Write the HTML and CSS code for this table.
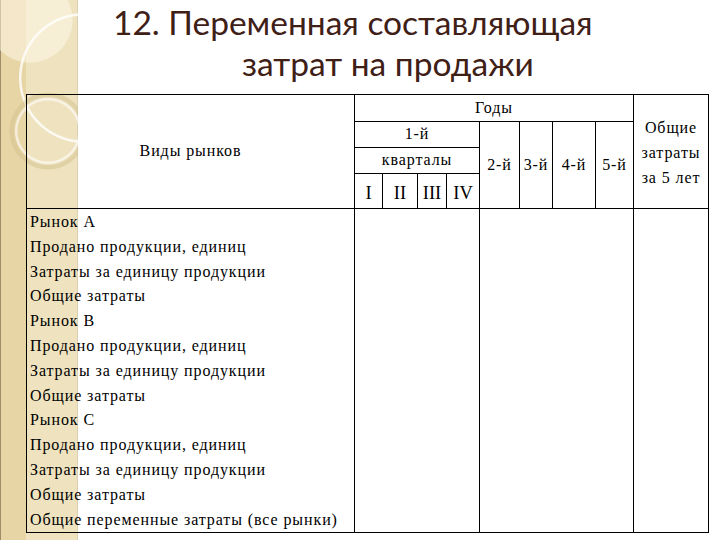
FILE: index.html
```html
<!DOCTYPE html>
<html lang="ru">
<head>
<meta charset="utf-8">
<link rel="stylesheet" href="styles.css">
</head>
<body>
<div class="slide">
  <h1 class="title">
    <span class="line1">12. Переменная составляющая</span>
    <span class="line2">затрат на продажи</span>
  </h1>
  <table class="grid">
    <colgroup>
      <col class="c-name"><col class="c-q1"><col class="c-q2"><col class="c-q3"><col class="c-q4">
      <col class="c-y2"><col class="c-y3"><col class="c-y4"><col class="c-y5"><col class="c-tot">
    </colgroup>
    <tr class="r1">
      <td rowspan="4" class="head-name">Виды рынков</td>
      <td colspan="8">Годы</td>
      <td rowspan="4" class="tot">Общие<br>затраты<br>за 5 лет</td>
    </tr>
    <tr class="r2">
      <td colspan="4">1-й</td>
      <td rowspan="3">2-й</td>
      <td rowspan="3">3-й</td>
      <td rowspan="3">4-й</td>
      <td rowspan="3">5-й</td>
    </tr>
    <tr class="r3">
      <td colspan="4">кварталы</td>
    </tr>
    <tr class="r4">
      <td class="roman">I</td><td class="roman">II</td><td class="roman">III</td><td class="roman">IV</td>
    </tr>
    <tr class="body">
      <td class="items">Рынок А<br>Продано продукции, единиц<br>Затраты за единицу продукции<br>Общие затраты<br>Рынок В<br>Продано продукции, единиц<br>Затраты за единицу продукции<br>Общие затраты<br>Рынок С<br>Продано продукции, единиц<br>Затраты за единицу продукции<br>Общие затраты<br>Общие переменные затраты (все рынки)</td>
      <td colspan="4"></td>
      <td colspan="4"></td>
      <td></td>
    </tr>
  </table>
</div>
</body>
</html>
```
FILE: styles.css
```css
html, body {
  margin: 0;
  padding: 0;
  background: #fff;
}
.slide {
  width: 720px;
  height: 540px;
  overflow: hidden;
  background-color: #fff;
  background-image:
    radial-gradient(circle at 48px 131px, transparent 30px, rgba(255,255,255,0.6) 31px, rgba(255,255,255,0.6) 32.5px, transparent 33.5px),
    radial-gradient(circle at 48px 131px, transparent 33px, rgba(210,192,140,0.5) 35px, rgba(210,192,140,0.5) 38px, transparent 39px),
    radial-gradient(circle at 84px 78px, transparent 62px, rgba(255,255,255,0.8) 63px, rgba(255,255,255,0.8) 64.5px, transparent 65.5px),
    radial-gradient(circle at 30px 20px, rgba(255,250,235,0.5) 0, rgba(255,250,235,0.5) 42px, transparent 43px),
    linear-gradient(to right, #a08c68 0, #a08c68 1px, #e7d5a6 1px, #e7d5a6 26px, #eee2bf 26px, #eee2bf 77px, #dcd0b4 77px, #dcd0b4 78px, transparent 78px);
  background-size: 78px 540px;
  background-repeat: no-repeat;
}
.title {
  margin: 0;
  height: 94px;
  box-sizing: border-box;
  padding-top: 2px;
  font-family: "Lato", "Open Sans", sans-serif;
  font-weight: 400;
  font-size: 33.5px;
  line-height: 41px;
  color: #3f2017;
}
.line1, .line2 {
  display: block;
  white-space: nowrap;
}
.line1 { padding-left: 113px; }
.line2 { padding-left: 242px; }
.grid {
  margin-left: 26px;
  width: 682px;
  table-layout: fixed;
  border-collapse: collapse;
  font-family: "Liberation Serif", "Lato", serif;
  font-size: 16px;
  letter-spacing: 0.9px;
  color: #000;
}
.grid td {
  border: 1px solid #000;
  padding: 0;
  text-align: center;
  vertical-align: middle;
  line-height: 24.8px;
  white-space: nowrap;
}
.grid td.roman {
  font-size: 18.5px;
  letter-spacing: 0;
  padding-top: 4px;
}
.c-name { width: 328px; }
.c-q1 { width: 28px; }
.c-q2 { width: 35px; }
.c-q3 { width: 29px; }
.c-q4 { width: 33px; }
.c-y2 { width: 40px; }
.c-y3 { width: 33px; }
.c-y4 { width: 43px; }
.c-y5 { width: 38px; }
.c-tot { width: 75px; }
.r1 { height: 27px; }
.r2 { height: 26px; }
.r3 { height: 26px; }
.r4 { height: 35px; }
.body { height: 322px; }
.grid td.tot { padding-top: 4px; }
.grid td.items {
  text-align: left;
  vertical-align: top;
  padding: 1px 0 0 3px;
}
```
